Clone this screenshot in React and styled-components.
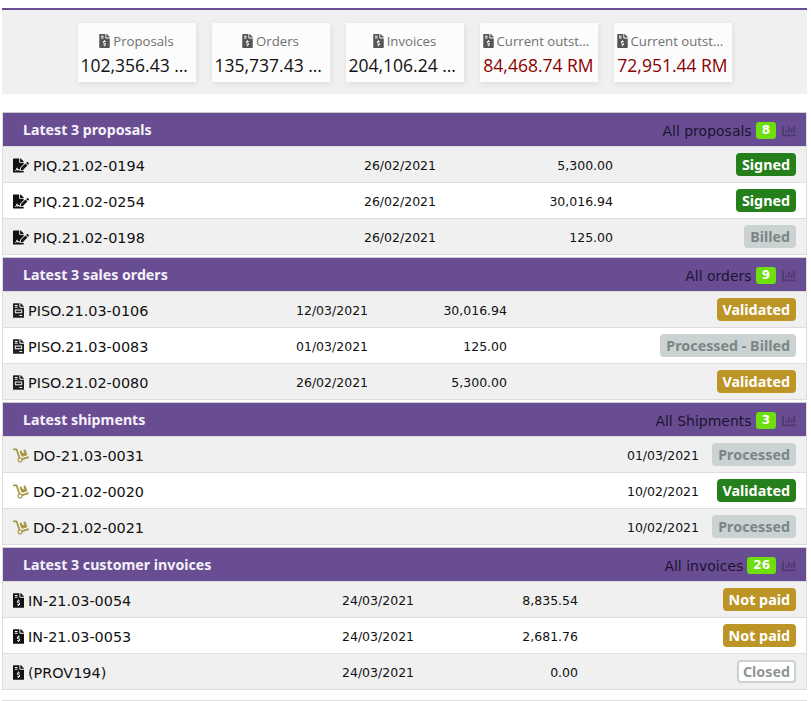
import styled, { createGlobalStyle } from "styled-components"
import { FaFileSignature, FaFileInvoice, FaFileInvoiceDollar, FaDolly, FaChartBar } from "react-icons/fa"

const GlobalStyle = createGlobalStyle`
    html, body {
        margin: 0;
        padding: 0;
        background: #fff;
    }
    body {
        font-family: "DejaVu Sans", sans-serif;
        font-size: 13px;
        color: #111;
    }
`;

const Page = styled.div`
    width: 805px;
    margin-left: 2px;
    padding-top: 8px;
    height: 692px;
    border-bottom: 1px solid #ddd;
`;

const StatsBar = styled.div`
    display: flex;
    justify-content: center;
    gap: 16px;
    height: 86px;
    padding-top: 13px;
    box-sizing: border-box;
    background: #f0f0f0;
    border-top: 2px solid #694d93;
    margin-bottom: 18px;
`;

const StatCard = styled.div`
    width: 118px;
    height: 59px;
    padding: 0 3px;
    box-sizing: border-box;
    background: #fcfcfc;
    box-shadow: 1px 2px 6px rgba(0, 0, 0, 0.08);
    text-align: center;
`;

const StatLabel = styled.div`
    display: flex;
    align-items: center;
    justify-content: center;
    gap: 3px;
    margin-top: 8px;
    padding-top: 1px;
    height: 18px;
    color: #707070;
    font-family: "Open Sans", sans-serif;
    font-size: 13.2px;
    white-space: nowrap;
    overflow: hidden;

    & svg {
        flex: none;
        width: 11px;
        height: 14px;
        color: #555;
    }
    & span {
        overflow: hidden;
        text-overflow: ellipsis;
    }
`;

const StatValue = styled.div`
    margin-top: 3px;
    font-family: "Open Sans", sans-serif;
    font-size: 17.5px;
    line-height: 24px;
    white-space: nowrap;
    overflow: hidden;
    text-overflow: ellipsis;
    color: ${(props) => (props.$late ? "#8b0000" : "#111")};
`;

const Section = styled.section`
    border: 1px solid #ddd;
    border-top: 1px solid #ccc;
    margin-bottom: 2px;
`;

const SectionHead = styled.div`
    display: flex;
    align-items: center;
    justify-content: space-between;
    height: 31px;
    padding: 2px 10px 0 20px;
    background: #694d93;
`;

const SectionTitle = styled.div`
    margin-top: -2px;
    color: #f4f1f8;
    font-family: "Noto Sans", sans-serif;
    font-weight: 700;
    font-size: 14.2px;
`;

const SectionLink = styled.div`
    display: flex;
    align-items: center;
    gap: 4px;
    color: #1d1330;
    font-size: 14px;

    & svg {
        color: #4f3a70;
        margin-left: 2px;
    }
`;

const Count = styled.span`
    padding: 0 6px;
    height: 17px;
    line-height: 17px;
    border-radius: 3px;
    background: #6ede0c;
    color: #fff;
    font-size: 12px;
    font-weight: 700;
    text-align: center;
`;

const Row = styled.div`
    display: grid;
    grid-template-columns: ${(props) => props.$cols};
    align-items: center;
    height: 35px;
    padding: 0 10px;
    background: ${(props) => (props.$odd ? "#f0f0f0" : "#fff")};
    border-top: 1px solid #ddd;
`;

const RefCell = styled.div`
    display: flex;
    align-items: center;
    gap: 4px;
    padding-top: 2px;
    white-space: nowrap;
    font-size: 14.4px;

    & svg {
        flex: none;
        width: ${(props) => (props.$narrow ? 11 : 16)}px;
        height: 15px;
        color: ${(props) => props.$iconColor};
    }
`;

const DateCell = styled.div`
    padding-top: 2px;
    font-size: 12.5px;
    text-align: right;
`;

const AmountCell = styled.div`
    padding-top: 2px;
    font-size: 12.5px;
    text-align: right;
`;

const BadgeCell = styled.div`
    display: flex;
    justify-content: flex-end;
`;

const badgeColors = {
    green: { bg: "#25801c", fg: "#fff", line: "#25801c" },
    gold: { bg: "#bc9526", fg: "#fff", line: "#bc9526" },
    grey: { bg: "#cad2d2", fg: "#7d8686", line: "#cad2d2" },
    closed: { bg: "#fff", fg: "#8f9797", line: "#cad2d2" },
};

const Badge = styled.span`
    height: 23px;
    line-height: 19px;
    padding: 0 4px;
    box-sizing: border-box;
    border-radius: 4px;
    border: 2px solid ${(props) => badgeColors[props.$kind].line};
    background: ${(props) => badgeColors[props.$kind].bg};
    color: ${(props) => badgeColors[props.$kind].fg};
    font-family: "Noto Sans", sans-serif;
    font-size: 14.3px;
    font-weight: 700;
    white-space: nowrap;
`;

const stats = [
    { label: "Proposals", value: "102,356.43 RM" },
    { label: "Orders", value: "135,737.43 RM" },
    { label: "Invoices", value: "204,106.24 RM" },
    { label: "Current outstanding", value: "84,468.74 RM", late: true },
    { label: "Current outstanding", value: "72,951.44 RM", late: true },
];

const sections = [
    {
        title: "Latest 3 proposals",
        link: "All proposals",
        count: 8,
        cols: "343px 80px 177px 1fr",
        Icon: FaFileSignature,
        iconColor: "#111",
        rows: [
            ["PIQ.21.02-0194", "26/02/2021", "5,300.00", "Signed", "green"],
            ["PIQ.21.02-0254", "26/02/2021", "30,016.94", "Signed", "green"],
            ["PIQ.21.02-0198", "26/02/2021", "125.00", "Billed", "grey"],
        ],
    },
    {
        title: "Latest 3 sales orders",
        link: "All orders",
        count: 9,
        cols: "283px 72px 139px 1fr",
        Icon: FaFileInvoice,
        iconColor: "#222",
        narrow: true,
        rows: [
            ["PISO.21.03-0106", "12/03/2021", "30,016.94", "Validated", "gold"],
            ["PISO.21.03-0083", "01/03/2021", "125.00", "Processed - Billed", "grey"],
            ["PISO.21.02-0080", "26/02/2021", "5,300.00", "Validated", "gold"],
        ],
    },
    {
        title: "Latest shipments",
        link: "All Shipments",
        count: 3,
        cols: "499px 187px 1fr",
        Icon: FaDolly,
        iconColor: "#a69944",
        rows: [
            ["DO-21.03-0031", "01/03/2021", null, "Processed", "grey"],
            ["DO-21.02-0020", "10/02/2021", null, "Validated", "green"],
            ["DO-21.02-0021", "10/02/2021", null, "Processed", "grey"],
        ],
    },
    {
        title: "Latest 3 customer invoices",
        link: "All invoices",
        count: 26,
        cols: "329px 72px 164px 1fr",
        Icon: FaFileInvoiceDollar,
        iconColor: "#111",
        narrow: true,
        rows: [
            ["IN-21.03-0054", "24/03/2021", "8,835.54", "Not paid", "gold"],
            ["IN-21.03-0053", "24/03/2021", "2,681.76", "Not paid", "gold"],
            ["(PROV194)", "24/03/2021", "0.00", "Closed", "closed"],
        ],
    },
];

function App() {
    return (
        <Page>
            <GlobalStyle />
            <StatsBar>
                {stats.map((stat, i) => (
                    <StatCard key={i}>
                        <StatLabel>
                            <FaFileInvoiceDollar />
                            <span>{stat.label}</span>
                        </StatLabel>
                        <StatValue $late={stat.late}>{stat.value}</StatValue>
                    </StatCard>
                ))}
            </StatsBar>
            {sections.map((section) => (
                <Section key={section.title}>
                    <SectionHead>
                        <SectionTitle>{section.title}</SectionTitle>
                        <SectionLink>
                            {section.link}
                            <Count>{section.count}</Count>
                            <FaChartBar size="14" />
                        </SectionLink>
                    </SectionHead>
                    <div>
                        {section.rows.map((row, i) => (
                            <Row key={row[0]} $cols={section.cols} $odd={i % 2 === 0}>
                                <RefCell $narrow={section.narrow} $iconColor={section.iconColor}>
                                    <section.Icon />
                                    {row[0]}
                                </RefCell>
                                <DateCell>{row[1]}</DateCell>
                                {row[2] && <AmountCell>{row[2]}</AmountCell>}
                                <BadgeCell>
                                    <Badge $kind={row[4]}>{row[3]}</Badge>
                                </BadgeCell>
                            </Row>
                        ))}
                    </div>
                </Section>
            ))}
        </Page>
    )
}

export default App
